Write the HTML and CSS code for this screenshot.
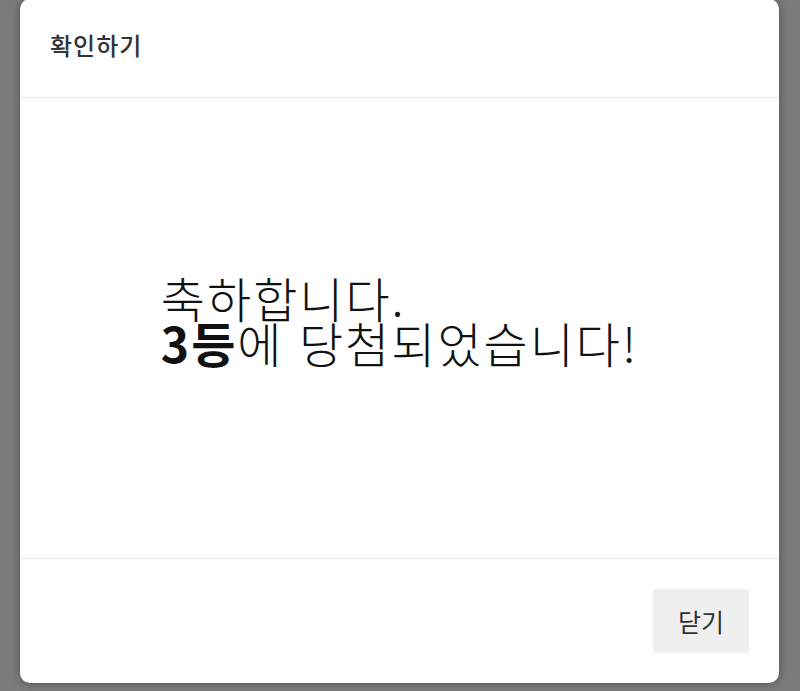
FILE: index.html
```html
<!DOCTYPE html>
<html lang="ko">
<head>
<meta charset="utf-8">
<title>확인하기</title>
<link rel="stylesheet" href="styles.css">
</head>
<body>
<div class="overlay">
  <div class="modal">
    <div class="modal-header">
      <h2 class="modal-title">확인하기</h2>
    </div>
    <div class="modal-body">
      <p class="message">축하합니다.<br><strong>3등</strong>에 당첨되었습니다!</p>
    </div>
    <div class="modal-footer">
      <button class="btn-close" type="button">닫기</button>
    </div>
  </div>
</div>
</body>
</html>
```

FILE: styles.css
```css
html, body {
  margin: 0;
  padding: 0;
  height: 100%;
}
body {
  background: #7b7b7b;
  font-family: "Noto Sans CJK KR", "Noto Sans", sans-serif;
  overflow: hidden;
}
.overlay {
  display: flex;
  justify-content: center;
  padding: 0 21px 0 20px;
}
.modal {
  width: 759px;
  height: 684px;
  margin-top: -1px;
  background: #fff;
  border-radius: 10px;
  box-shadow: 0 0 10px rgba(0, 0, 0, 0.35);
  display: flex;
  flex-direction: column;
  flex-shrink: 0;
}
.modal-header {
  border-bottom: 1px solid #e6e6e6;
  display: flex;
  align-items: center;
  padding: 0 30px 6px;
  box-sizing: border-box;
  height: 99px;
}
.modal-title {
  margin: 0;
  font-size: 24px;
  letter-spacing: 1px;
  font-weight: 500;
  color: #333;
  line-height: 1;
}
.modal-body {
  flex: 1;
  display: flex;
  align-items: center;
  justify-content: center;
  border-bottom: 1px solid #e6e6e6;
}
.message {
  margin: 0 0 16px 0;
  font-size: 48px;
  letter-spacing: 2px;
  line-height: 45px;
  color: #111;
  text-align: left;
  font-weight: 300;
}
.message strong {
  font-weight: 700;
}
.modal-footer {
  height: 124px;
  padding: 30px;
  box-sizing: border-box;
  display: flex;
  justify-content: flex-end;
  align-items: flex-start;
}
.btn-close {
  width: 96px;
  height: 64px;
  border: none;
  background: #efefef;
  color: #333;
  font-family: inherit;
  font-size: 25px;
  padding: 0;
  cursor: pointer;
}
```
